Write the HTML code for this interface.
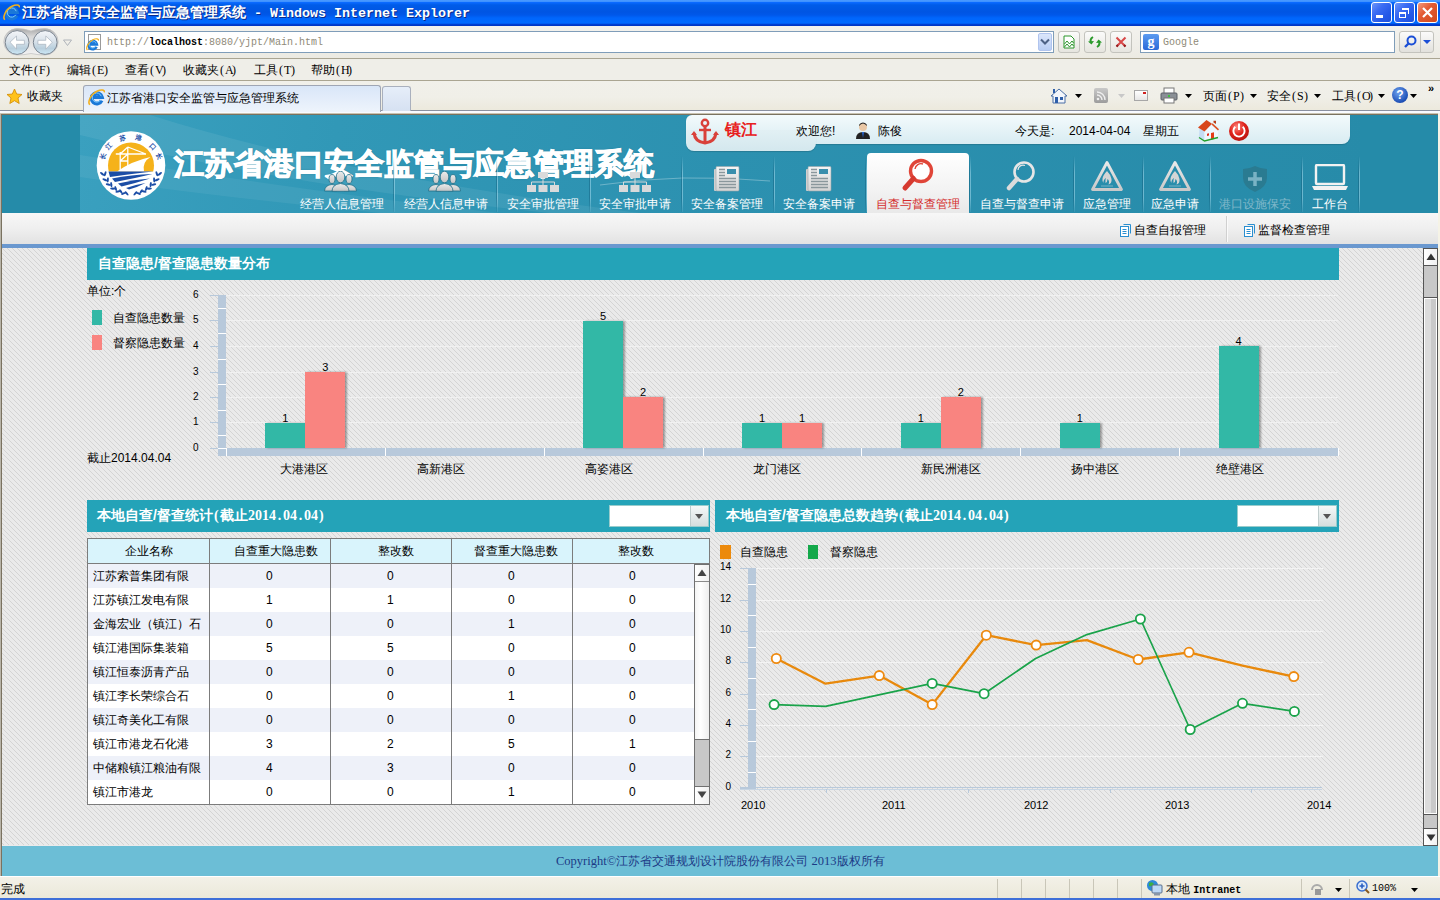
<!DOCTYPE html><html><head><meta charset="utf-8"><style>
*{margin:0;padding:0;box-sizing:border-box}
html,body{width:1440px;height:900px;overflow:hidden;background:#ece9d8;font-family:"Liberation Sans",sans-serif;font-size:12px;color:#000;line-height:1}
.a{position:absolute;white-space:nowrap}
.m{font-family:"Liberation Mono",monospace}
.wb{top:2px;width:21px;height:21px;border:1px solid #fff;border-radius:3px;background:linear-gradient(135deg,#6d96fa 0%,#3b6cf3 35%,#2559e8 70%,#1e50dc 100%)}
.nl{color:#fff;font-size:12px;top:198px}
.sep{top:156px;width:2px;height:56px;background:linear-gradient(90deg,rgba(10,80,110,.35) 50%,rgba(190,235,250,.45) 50%);-webkit-mask-image:linear-gradient(rgba(0,0,0,0),#000 30%,#000 75%,rgba(0,0,0,.2))}
.sec{background:#24a3b8;color:#fff;font-weight:bold;font-size:14px}
.tk{font-size:10px;color:#000}
</style></head><body>
<div class="a" style="left:0;top:0;width:1440px;height:26px;background:linear-gradient(#4a9aff 0px,#3f92ff 1.5px,#0a6aff 2.5px,#005ce8 5px,#0055e3 12px,#0058ea 15px,#0066fc 18px,#006aff 23.2px,#0040d4 24.2px,#0034c0 26px)"></div>
<svg class="a" style="left:3px;top:4px" width="17" height="17" viewBox="0 0 17 17"><path d="M13.6 11.4A5.2 5.2 0 1 1 13.9 8.1H4.2" fill="none" stroke="#1a78d8" stroke-width="3.8"/><path d="M12.8 10.8A4.6 4.6 0 1 1 13.2 7.2" fill="none" stroke="#7ccaff" stroke-width="1"/><path d="M1.8 15.8C-0.8 13 3 5 9 2.2C13 0.3 16.8 0.6 16.4 3.4" fill="none" stroke="#f2b01e" stroke-width="1.6"/></svg>
<div class="a" style="left:22px;top:5px;color:#fff;font-weight:bold;font-size:14px;text-shadow:1px 1px 0 #0b2c8a">江苏省港口安全监管与应急管理系统</div>
<div class="a m" style="left:254px;top:7px;color:#fff;font-weight:bold;font-size:13.33px;text-shadow:1px 1px 0 #0b2c8a">- Windows Internet Explorer</div>
<div class="a wb" style="left:1371px"><div class="a" style="left:4px;top:12px;width:7px;height:3px;background:#fff"></div></div>
<div class="a wb" style="left:1394px"><div class="a" style="left:4px;top:9px;width:7px;height:6px;border:1px solid #fff;border-top-width:2px"></div><div class="a" style="left:7px;top:5px;width:7px;height:6px;border-top:2px solid #fff;border-right:1px solid #fff"></div></div>
<div class="a wb" style="left:1417px;background:linear-gradient(135deg,#f29a7e 0%,#e35b34 40%,#d14a1c 100%)"><svg class="a" style="left:3px;top:3px" width="13" height="13"><path d="M2 2L11 11M11 2L2 11" stroke="#fff" stroke-width="2.2"/></svg></div>
<div class="a" style="left:0;top:26px;width:1440px;height:32px;background:linear-gradient(#f3f2ee 0%,#efeee8 60%,#eceae2 100%)"></div>
<div class="a" style="left:0;top:58px;width:1440px;height:1px;background:#aaa592"></div>
<svg class="a" style="left:0;top:26px" width="80" height="32" viewBox="0 26 80 32">
<defs><linearGradient id="bf" x1="0" y1="0" x2="0" y2="1"><stop offset="0" stop-color="#f4f6f9"/><stop offset=".45" stop-color="#d9e2ea"/><stop offset=".75" stop-color="#b9cfdd"/><stop offset="1" stop-color="#cfeaf8"/></linearGradient>
<linearGradient id="pl" x1="0" y1="0" x2="0" y2="1"><stop offset="0" stop-color="#a9a9a9"/><stop offset=".3" stop-color="#d8d8d8"/><stop offset="1" stop-color="#f2f2f2"/></linearGradient></defs>
<path d="M17 28.6Q24 28.6 31 31Q38 28.6 45 28.6A13.2 13.2 0 0 1 45 55Q38 55 31 53.5Q24 55 17 55A13.2 13.2 0 0 1 17 28.6Z" fill="url(#pl)" stroke="#c4c4c4" stroke-width=".8"/>
<circle cx="17.1" cy="42.5" r="11.9" fill="url(#bf)" stroke="#7b8590" stroke-width="1"/>
<circle cx="45.2" cy="42.5" r="11.9" fill="url(#bf)" stroke="#7b8590" stroke-width="1"/>
<path d="M10 42.2L16.5 36V40.3H24.4V44.3H16.5V49.2Z" fill="#fff" stroke="#a8b2bd" stroke-width=".7" stroke-linejoin="round"/>
<path d="M52.3 42.2L45.8 36V40.3H37.9V44.3H45.8V49.2Z" fill="#fff" stroke="#a8b2bd" stroke-width=".7" stroke-linejoin="round"/>
<path d="M63.5 40H71.5L67.5 45.5Z" fill="none" stroke="#b0b4ba" stroke-width="1"/>
</svg>
<div class="a" style="left:84px;top:31px;width:970px;height:22px;background:#fff;border:1px solid #7f9db9"></div>
<div class="a" style="left:88px;top:34px;width:13px;height:16px;background:#fff;border:1px solid #9a9a9a"></div>
<svg class="a" style="left:86px;top:38px" width="13" height="13" viewBox="0 0 17 17"><path d="M13.6 11.4A5.2 5.2 0 1 1 13.9 8.1H4.2" fill="none" stroke="#1a78d8" stroke-width="3.8"/><path d="M12.8 10.8A4.6 4.6 0 1 1 13.2 7.2" fill="none" stroke="#7ccaff" stroke-width="1"/><path d="M1.8 15.8C-0.8 13 3 5 9 2.2C13 0.3 16.8 0.6 16.4 3.4" fill="none" stroke="#f2b01e" stroke-width="1.6"/></svg>
<div class="a m" style="left:107px;top:38px;font-size:10px;color:#8f8a78">http://<b style="color:#000">localhost</b>:8080/yjpt/Main.html</div>
<div class="a" style="left:1038px;top:33px;width:14px;height:18px;background:linear-gradient(#dbe6fb,#b9cdf4);border:1px solid #b0c4ee;border-radius:2px"></div>
<svg class="a" style="left:1040px;top:38px" width="10" height="8"><path d="M1 1.5L5 5.5L9 1.5" fill="none" stroke="#4d6185" stroke-width="2"/></svg>
<div class="a" style="left:1058px;top:31px;width:22px;height:22px;border:1px solid #c3c3bd;border-radius:3px;background:linear-gradient(#fbfbfa,#e6e5df)"></div>
<div class="a" style="left:1084px;top:31px;width:22px;height:22px;border:1px solid #c3c3bd;border-radius:3px;background:linear-gradient(#fbfbfa,#e6e5df)"></div>
<div class="a" style="left:1110px;top:31px;width:22px;height:22px;border:1px solid #c3c3bd;border-radius:3px;background:linear-gradient(#fbfbfa,#e6e5df)"></div>
<svg class="a" style="left:1063px;top:35px" width="12" height="14"><path d="M1 1H8L11 4V13H1Z" fill="#fff" stroke="#2a962a"/><path d="M1.5 9L4 6L6.5 9L9 6L10.5 8M1.5 12L4 9L6.5 12L9 9L10.5 11" fill="none" stroke="#2a962a"/></svg>
<svg class="a" style="left:1087px;top:35px" width="16" height="14"><path d="M6 2Q2.5 4 4 8" fill="none" stroke="#2c9a2c" stroke-width="2"/><path d="M1 6.5L4.5 9.5L7 6Z" fill="#2c9a2c"/><path d="M10 12Q13.5 10 12 6" fill="none" stroke="#2c9a2c" stroke-width="2"/><path d="M15 7.5L11.5 4.5L9 8Z" fill="#2c9a2c"/></svg>
<svg class="a" style="left:1115px;top:36px" width="12" height="12"><path d="M1.5 1.5L10.5 10.5M10.5 1.5L1.5 10.5" stroke="#d84848" stroke-width="2"/><path d="M3 9L1.5 10.5M9 9L10.5 10.5" stroke="#902020" stroke-width="2"/></svg>
<div class="a" style="left:1140px;top:31px;width:255px;height:22px;background:#fff;border:1px solid #7f9db9"></div>
<div class="a" style="left:1143px;top:34px;width:16px;height:16px;background:linear-gradient(#5b9bf0,#2b6ad8);border-radius:2px;color:#fff;font-size:14px;font-weight:bold;text-align:center;line-height:16px;font-family:Liberation Serif">g</div>
<div class="a m" style="left:1163px;top:38px;font-size:10px;color:#8f8a78">Google</div>
<div class="a" style="left:1399px;top:31px;width:35px;height:22px;border:1px solid #c3c3bd;border-radius:3px;background:linear-gradient(#fbfbfa,#e2e1dc)"></div>
<div class="a" style="left:1420px;top:32px;width:1px;height:20px;background:#c3c3bd"></div>
<svg class="a" style="left:1402px;top:34px" width="16" height="16"><circle cx="9.5" cy="6.5" r="4" fill="none" stroke="#1b4fd6" stroke-width="2"/><path d="M6.5 9.5L3 13" stroke="#1b4fd6" stroke-width="2.4"/></svg>
<svg class="a" style="left:1423px;top:39px" width="8" height="6"><path d="M0 1H8L4 5Z" fill="#1b4fd6"/></svg>
<div class="a" style="left:0;top:59px;width:1440px;height:21px;background:#efeee8"></div>
<div class="a" style="left:0;top:80px;width:1440px;height:1px;background:#aaa592"></div>
<div class="a" style="left:9px;top:64px;font-size:12px">文件<span style="display:inline-block;width:6px;text-align:center;font-family:Liberation Serif;font-size:12px;">(</span><span style="display:inline-block;width:6px;text-align:center;font-family:Liberation Serif;font-size:12px;">F</span><span style="display:inline-block;width:6px;text-align:center;font-family:Liberation Serif;font-size:12px;">)</span></div>
<div class="a" style="left:67px;top:64px;font-size:12px">编辑<span style="display:inline-block;width:6px;text-align:center;font-family:Liberation Serif;font-size:12px;">(</span><span style="display:inline-block;width:6px;text-align:center;font-family:Liberation Serif;font-size:12px;">E</span><span style="display:inline-block;width:6px;text-align:center;font-family:Liberation Serif;font-size:12px;">)</span></div>
<div class="a" style="left:125px;top:64px;font-size:12px">查看<span style="display:inline-block;width:6px;text-align:center;font-family:Liberation Serif;font-size:12px;">(</span><span style="display:inline-block;width:6px;text-align:center;font-family:Liberation Serif;font-size:12px;">V</span><span style="display:inline-block;width:6px;text-align:center;font-family:Liberation Serif;font-size:12px;">)</span></div>
<div class="a" style="left:183px;top:64px;font-size:12px">收藏夹<span style="display:inline-block;width:6px;text-align:center;font-family:Liberation Serif;font-size:12px;">(</span><span style="display:inline-block;width:6px;text-align:center;font-family:Liberation Serif;font-size:12px;">A</span><span style="display:inline-block;width:6px;text-align:center;font-family:Liberation Serif;font-size:12px;">)</span></div>
<div class="a" style="left:254px;top:64px;font-size:12px">工具<span style="display:inline-block;width:6px;text-align:center;font-family:Liberation Serif;font-size:12px;">(</span><span style="display:inline-block;width:6px;text-align:center;font-family:Liberation Serif;font-size:12px;">T</span><span style="display:inline-block;width:6px;text-align:center;font-family:Liberation Serif;font-size:12px;">)</span></div>
<div class="a" style="left:311px;top:64px;font-size:12px">帮助<span style="display:inline-block;width:6px;text-align:center;font-family:Liberation Serif;font-size:12px;">(</span><span style="display:inline-block;width:6px;text-align:center;font-family:Liberation Serif;font-size:12px;">H</span><span style="display:inline-block;width:6px;text-align:center;font-family:Liberation Serif;font-size:12px;">)</span></div>
<div class="a" style="left:0;top:81px;width:1440px;height:32px;background:linear-gradient(#f1f0ea,#f0efe8 50%,#ebe8da)"></div>
<div class="a" style="left:0;top:110px;width:1440px;height:1px;background:#8a90a0"></div>
<div class="a" style="left:0;top:111px;width:1440px;height:2px;background:#f8faff"></div>
<div class="a" style="left:0;top:113px;width:1440px;height:1px;background:#c9c3b0"></div>
<svg class="a" style="left:6px;top:88px" width="17" height="17" viewBox="0 0 17 17"><path d="M8.5 1L10.7 6L16 6.5L12 10L13.2 15.5L8.5 12.7L3.8 15.5L5 10L1 6.5L6.3 6Z" fill="#ffc21a" stroke="#d08a00" stroke-width=".8"/></svg>
<div class="a" style="left:27px;top:90px;font-size:12px">收藏夹</div>
<div class="a" style="left:83px;top:85px;width:298px;height:27px;border:1px solid #9fa6b5;border-bottom:none;border-radius:3px 3px 0 0;background:linear-gradient(#d9e6f8,#eef4fc)"></div>
<svg class="a" style="left:88px;top:89px" width="17" height="17" viewBox="0 0 17 17"><path d="M13.6 11.4A5.2 5.2 0 1 1 13.9 8.1H4.2" fill="none" stroke="#1a78d8" stroke-width="3.8"/><path d="M12.8 10.8A4.6 4.6 0 1 1 13.2 7.2" fill="none" stroke="#7ccaff" stroke-width="1"/><path d="M1.8 15.8C-0.8 13 3 5 9 2.2C13 0.3 16.8 0.6 16.4 3.4" fill="none" stroke="#f2b01e" stroke-width="1.6"/></svg>
<div class="a" style="left:107px;top:92px;font-size:12px">江苏省港口安全监管与应急管理系统</div>
<div class="a" style="left:382px;top:86px;width:29px;height:25px;border:1px solid #a9b0bd;border-bottom:none;border-radius:3px 3px 0 0;background:linear-gradient(#e6eef9,#d6e1f2)"></div>
<svg class="a" style="left:1050px;top:87px" width="18" height="18"><path d="M9 2L1 9H3V16H15V9H17Z" fill="#f3f6fb" stroke="#4a6fa5"/><rect x="5" y="10" width="3" height="6" fill="#2e5fa9"/><rect x="10" y="10" width="3" height="3" fill="#2e5fa9"/><rect x="3" y="2" width="2" height="4" fill="#2e5fa9"/></svg>
<svg class="a" style="left:1075px;top:94px" width="7" height="4"><path d="M0 0H7L3.5 4Z" fill="#000"/></svg>
<div class="a" style="left:1094px;top:88px;width:14px;height:15px;border-radius:2px;background:linear-gradient(#c9c9c9,#9c9c9c)"></div>
<svg class="a" style="left:1096px;top:91px" width="10" height="10"><circle cx="2" cy="8" r="1.3" fill="#eee"/><path d="M1 4A5 5 0 0 1 6 9M1 1A8 8 0 0 1 9 9" fill="none" stroke="#eee" stroke-width="1.4"/></svg>
<svg class="a" style="left:1118px;top:94px" width="7" height="4"><path d="M0 0H7L3.5 4Z" fill="#c8c8c8"/></svg>
<div class="a" style="left:1134px;top:90px;width:14px;height:11px;border:1px solid #a7a7a7;background:linear-gradient(#fff,#e6e6e6)"></div>
<div class="a" style="left:1143px;top:92px;width:3px;height:2px;background:#d02020"></div>
<svg class="a" style="left:1160px;top:87px" width="18" height="17"><rect x="4" y="1" width="10" height="6" fill="#fff" stroke="#777"/><rect x="1" y="6" width="16" height="7" rx="1" fill="#8a8f96" stroke="#5b5f66"/><rect x="4" y="11" width="10" height="5" fill="#fff" stroke="#777"/><rect x="8" y="8" width="2" height="2" fill="#3fbf3f"/></svg>
<svg class="a" style="left:1185px;top:94px" width="7" height="4"><path d="M0 0H7L3.5 4Z" fill="#000"/></svg>
<div class="a" style="left:1203px;top:90px;font-size:12px">页面<span style="display:inline-block;width:6px;text-align:center;font-family:Liberation Serif;font-size:12px;">(</span><span style="display:inline-block;width:6px;text-align:center;font-family:Liberation Serif;font-size:12px;">P</span><span style="display:inline-block;width:6px;text-align:center;font-family:Liberation Serif;font-size:12px;">)</span></div>
<svg class="a" style="left:1250px;top:94px" width="7" height="4"><path d="M0 0H7L3.5 4Z" fill="#000"/></svg>
<div class="a" style="left:1267px;top:90px;font-size:12px">安全<span style="display:inline-block;width:6px;text-align:center;font-family:Liberation Serif;font-size:12px;">(</span><span style="display:inline-block;width:6px;text-align:center;font-family:Liberation Serif;font-size:12px;">S</span><span style="display:inline-block;width:6px;text-align:center;font-family:Liberation Serif;font-size:12px;">)</span></div>
<svg class="a" style="left:1314px;top:94px" width="7" height="4"><path d="M0 0H7L3.5 4Z" fill="#000"/></svg>
<div class="a" style="left:1332px;top:90px;font-size:12px">工具<span style="display:inline-block;width:6px;text-align:center;font-family:Liberation Serif;font-size:12px;">(</span><span style="display:inline-block;width:6px;text-align:center;font-family:Liberation Serif;font-size:12px;">O</span><span style="display:inline-block;width:6px;text-align:center;font-family:Liberation Serif;font-size:12px;">)</span></div>
<svg class="a" style="left:1378px;top:94px" width="7" height="4"><path d="M0 0H7L3.5 4Z" fill="#000"/></svg>
<div class="a" style="left:1392px;top:87px;width:16px;height:16px;border-radius:50%;background:radial-gradient(circle at 40% 35%,#6fa3ef,#1d4fb6 70%,#183c86);color:#fff;font-weight:bold;font-size:12px;text-align:center;line-height:16px">?</div>
<svg class="a" style="left:1410px;top:94px" width="7" height="4"><path d="M0 0H7L3.5 4Z" fill="#000"/></svg>
<div class="a" style="left:1428px;top:83px;font-size:11px;font-weight:bold">»</div>
<div class="a" style="left:0;top:114px;width:1440px;height:763px;background:#ebebeb"></div>
<svg class="a" style="left:2px;top:248px" width="1436" height="597"><defs><pattern id="st" width="5" height="5" patternUnits="userSpaceOnUse"><rect width="5" height="5" fill="#eaeaea"/><rect x="0" y="0" width="1" height="1" fill="#d4d4d4"/><rect x="1" y="1" width="1" height="1" fill="#d4d4d4"/><rect x="2" y="2" width="1" height="1" fill="#d4d4d4"/><rect x="3" y="3" width="1" height="1" fill="#d4d4d4"/><rect x="4" y="4" width="1" height="1" fill="#d4d4d4"/></pattern></defs><rect width="1436" height="597" fill="url(#st)"/></svg>
<div class="a" style="left:0;top:115px;width:1440px;height:98px;background:#258ba9"></div>
<div class="a" style="left:80px;top:115px;width:1280px;height:98px;background:linear-gradient(100deg,#3aa0bf 0%,#3198b7 20%,#2c91b0 50%,#278ba9 100%)"></div>
<svg class="a" style="left:80px;top:115px" width="1280" height="98"><path d="M0 0H70Q260 60 560 98H470Q200 70 0 20Z" fill="rgba(255,255,255,.07)"/><path d="M0 40Q250 80 420 98H300Q120 80 0 62Z" fill="rgba(255,255,255,.06)"/><path d="M520 70Q600 58 690 66" stroke="rgba(255,255,255,.3)" fill="none"/></svg>
<div class="a" style="left:0;top:114px;width:1440px;height:1px;background:#7a7260"></div>
<div class="a" style="left:0;top:114px;width:1px;height:763px;background:#b8b4a8"></div>
<div class="a" style="left:1px;top:114px;width:1px;height:763px;background:#7a7260"></div>
<div class="a" style="left:1438px;top:113px;width:2px;height:764px;background:#f2f1ea"></div>
<svg class="a" style="left:96px;top:131px" width="70" height="70" viewBox="0 0 70 70"><circle cx="35" cy="34.5" r="34.3" fill="#fff"/><clipPath id="lc"><rect x="0" y="0" width="70" height="40.5"/></clipPath><circle cx="35" cy="34.5" r="23" fill="#f5b21a" clip-path="url(#lc)"/><path d="M21 40.5Q36 30 54.5 26Q46 31 48 40.5Z" fill="#fff"/><path d="M24.2 21V40M31.8 16V38M19.8 23H50M31.8 16L50 23M24.2 23L31.8 16M24.2 30H31.8M24.2 30L31.8 23" stroke="#fff" stroke-width="1.3" fill="none"/><path d="M12.5 40.6H57.3Q40 42.5 14 46Z" fill="#1b4da6"/><path d="M16 47.5Q35 43.5 56.5 43Q38 47.5 19 51Z" fill="#1b4da6"/><path d="M22 52.5Q38 48.5 54 47.5Q40 52 25.5 55.5Z" fill="#1b4da6"/><path d="M30 57Q40 53.5 49.5 52Q42 56 33 58.5Z" fill="#1b4da6"/><g fill="#1b4da6"><ellipse cx="9.2" cy="42.8" rx="2.6" ry="1.05" transform="rotate(108 9.2 42.8)"/><ellipse cx="6.2" cy="42.8" rx="2.6" ry="1.05" transform="rotate(38 6.2 42.8)"/><ellipse cx="11.8" cy="48.8" rx="2.6" ry="1.05" transform="rotate(95 11.8 48.8)"/><ellipse cx="8.8" cy="48.8" rx="2.6" ry="1.05" transform="rotate(25 8.8 48.8)"/><ellipse cx="15.3" cy="53.6" rx="2.6" ry="1.05" transform="rotate(83 15.3 53.6)"/><ellipse cx="12.3" cy="53.6" rx="2.6" ry="1.05" transform="rotate(13 12.3 53.6)"/><ellipse cx="19.7" cy="57.6" rx="2.6" ry="1.05" transform="rotate(71 19.7 57.6)"/><ellipse cx="16.7" cy="57.6" rx="2.6" ry="1.05" transform="rotate(1 16.7 57.6)"/><ellipse cx="24.9" cy="60.5" rx="2.6" ry="1.05" transform="rotate(59 24.9 60.5)"/><ellipse cx="21.9" cy="60.5" rx="2.6" ry="1.05" transform="rotate(-11 21.9 60.5)"/><ellipse cx="30.6" cy="62.4" rx="2.6" ry="1.05" transform="rotate(47 30.6 62.4)"/><ellipse cx="27.6" cy="62.4" rx="2.6" ry="1.05" transform="rotate(-23 27.6 62.4)"/><ellipse cx="60.8" cy="42.8" rx="2.6" ry="1.05" transform="rotate(-108 60.8 42.8)"/><ellipse cx="63.8" cy="42.8" rx="2.6" ry="1.05" transform="rotate(-38 63.8 42.8)"/><ellipse cx="58.2" cy="48.8" rx="2.6" ry="1.05" transform="rotate(-95 58.2 48.8)"/><ellipse cx="61.2" cy="48.8" rx="2.6" ry="1.05" transform="rotate(-25 61.2 48.8)"/><ellipse cx="54.7" cy="53.6" rx="2.6" ry="1.05" transform="rotate(-83 54.7 53.6)"/><ellipse cx="57.7" cy="53.6" rx="2.6" ry="1.05" transform="rotate(-13 57.7 53.6)"/><ellipse cx="50.3" cy="57.6" rx="2.6" ry="1.05" transform="rotate(-71 50.3 57.6)"/><ellipse cx="53.3" cy="57.6" rx="2.6" ry="1.05" transform="rotate(-1 53.3 57.6)"/><ellipse cx="45.1" cy="60.5" rx="2.6" ry="1.05" transform="rotate(-59 45.1 60.5)"/><ellipse cx="48.1" cy="60.5" rx="2.6" ry="1.05" transform="rotate(11 48.1 60.5)"/><ellipse cx="39.4" cy="62.4" rx="2.6" ry="1.05" transform="rotate(-47 39.4 62.4)"/><ellipse cx="42.4" cy="62.4" rx="2.6" ry="1.05" transform="rotate(23 42.4 62.4)"/></g><text x="6.4" y="25.0" font-size="6.5" fill="#1b4da6" text-anchor="middle" dominant-baseline="central" font-weight="bold" transform="rotate(-70 6.4 25.0)">长</text><text x="12.7" y="14.9" font-size="6.5" fill="#1b4da6" text-anchor="middle" dominant-baseline="central" font-weight="bold" transform="rotate(-45 12.7 14.9)">江</text><text x="26.9" y="6.4" font-size="6.5" fill="#1b4da6" text-anchor="middle" dominant-baseline="central" font-weight="bold" transform="rotate(-15 26.9 6.4)">苏</text><text x="42.9" y="6.4" font-size="6.5" fill="#1b4da6" text-anchor="middle" dominant-baseline="central" font-weight="bold" transform="rotate(15 42.9 6.4)">港</text><text x="57.1" y="15.3" font-size="6.5" fill="#1b4da6" text-anchor="middle" dominant-baseline="central" font-weight="bold" transform="rotate(45 57.1 15.3)">口</text><text x="63.3" y="25.1" font-size="6.5" fill="#1b4da6" text-anchor="middle" dominant-baseline="central" font-weight="bold" transform="rotate(70 63.3 25.1)">长</text></svg>
<div class="a" style="left:174px;top:149px;color:#fff;font-size:29.8px;font-weight:900;letter-spacing:0;-webkit-text-stroke:1.1px #fff;text-shadow:0 0 2px rgba(0,60,90,.4)">江苏省港口安全监管与应急管理系统</div>
<div class="a" style="left:686px;top:115px;width:664px;height:29px;border-radius:6px 0 8px 8px;background:linear-gradient(#f3fafc,#d8ecf2);box-shadow:0 1px 1px rgba(0,0,0,.15)"></div>
<div class="a" style="left:686px;top:130px;width:130px;height:21px;border-radius:0 0 8px 8px;background:linear-gradient(#e2f0f4,#d4e8ee);box-shadow:0 1px 1px rgba(0,0,0,.15)"></div>
<svg class="a" style="left:691px;top:118px" width="28" height="27" viewBox="0 0 28 27"><circle cx="14" cy="5" r="3.2" fill="none" stroke="#d9413a" stroke-width="2.4"/><path d="M14 8V24" stroke="#d9413a" stroke-width="3"/><path d="M8 12H20" stroke="#d9413a" stroke-width="2.4"/><path d="M3 15 Q4 24 14 25 Q24 24 25 15" fill="none" stroke="#d9413a" stroke-width="3"/><path d="M0 17L3 13L6 17Z M22 17L25 13L28 17Z" fill="#d9413a"/></svg>
<div class="a" style="left:725px;top:122px;color:#e82020;font-size:16px;font-weight:bold">镇江</div>
<div class="a" style="left:796px;top:125px;font-size:12px">欢迎您!</div>
<svg class="a" style="left:855px;top:122px" width="16" height="18"><circle cx="8" cy="5" r="4" fill="#e9c7a5"/><path d="M4 4Q8 -1 12 4Q12 1 8 0.5Q4 1 4 4Z" fill="#222"/><path d="M1 17Q1 10 8 10Q15 10 15 17Z" fill="#222"/><path d="M7 10L8 16L9 10Z" fill="#2a6ad8"/></svg>
<div class="a" style="left:878px;top:125px;font-size:12px">陈俊</div>
<div class="a" style="left:1015px;top:125px;font-size:12px">今天是:</div>
<div class="a" style="left:1069px;top:125px;font-size:12px">2014-04-04<span style="display:inline-block;width:13px"></span>星期五</div>
<svg class="a" style="left:1198px;top:120px" width="22" height="22" viewBox="0 0 22 22">
<path d="M1.5 8L6.5 11V21L1 17.5Z" fill="#c6dcf4"/>
<path d="M6.5 11L14 4L20 9.5V17.5L6.5 21Z" fill="#eef6fd"/>
<path d="M0 7.5L8.5 0L14 3.8L6.5 11.5Z" fill="#d8461b"/>
<path d="M14 3.8L20.5 9.8" stroke="#dc5020" stroke-width="1.6"/>
<path d="M15.5 0.8H18V4L15.5 2.5Z" fill="#b8401a"/>
<path d="M13 13L16 12.2V19L13 19.8Z" fill="#e53b16"/>
<path d="M9 13.8L11 13.3V15.6L9 16.1Z" fill="#e02a1a"/>
<path d="M1 17.5L6.5 21L20 17.5" fill="none" stroke="#22a02a" stroke-width="1.3"/>
</svg>
<svg class="a" style="left:1228px;top:120px" width="22" height="22" viewBox="0 0 22 22">
<defs><radialGradient id="pw" cx=".4" cy=".3" r=".75"><stop offset="0" stop-color="#ff8a80"/><stop offset=".5" stop-color="#e0231c"/><stop offset="1" stop-color="#b5120e"/></radialGradient></defs>
<circle cx="11" cy="11" r="10" fill="url(#pw)"/>
<path d="M7.3 6.8A5.6 5.6 0 1 0 14.7 6.8" fill="none" stroke="#fff" stroke-width="1.9"/>
<path d="M11 3.5V10" stroke="#fff" stroke-width="2"/>
</svg>
<div class="a sep" style="left:393px"></div>
<div class="a sep" style="left:496px"></div>
<div class="a sep" style="left:589px"></div>
<div class="a sep" style="left:681px"></div>
<div class="a sep" style="left:773px"></div>
<div class="a sep" style="left:865px"></div>
<div class="a sep" style="left:969px"></div>
<div class="a sep" style="left:1073px"></div>
<div class="a sep" style="left:1142px"></div>
<div class="a sep" style="left:1209px"></div>
<div class="a sep" style="left:1301px"></div>
<div class="a sep" style="left:1358px"></div>
<div class="a" style="left:867px;top:153px;width:102px;height:60px;border-radius:4px 4px 0 0;background:linear-gradient(#ffffff,#f3f3f3 60%,#e9e9e9)"></div>
<div class="a nl" style="left:300px;color:#fff">经营人信息管理</div>
<div class="a nl" style="left:404px;color:#fff">经营人信息申请</div>
<div class="a nl" style="left:507px;color:#fff">安全审批管理</div>
<div class="a nl" style="left:599px;color:#fff">安全审批申请</div>
<div class="a nl" style="left:691px;color:#fff">安全备案管理</div>
<div class="a nl" style="left:783px;color:#fff">安全备案申请</div>
<div class="a nl" style="left:876px;color:#d42c2c">自查与督查管理</div>
<div class="a nl" style="left:980px;color:#fff">自查与督查申请</div>
<div class="a nl" style="left:1083px;color:#fff">应急管理</div>
<div class="a nl" style="left:1151px;color:#fff">应急申请</div>
<div class="a nl" style="left:1219px;color:#7fb7c9">港口设施保安</div>
<div class="a nl" style="left:1312px;color:#fff">工作台</div>
<svg class="a" style="left:324px;top:171px" width="33" height="21" viewBox="0 0 33 21"><defs><linearGradient id="pg" x1="0" y1="0" x2="0" y2="1"><stop offset="0" stop-color="#ececec"/><stop offset="1" stop-color="#c4c4c4"/></linearGradient></defs><g fill="url(#pg)" stroke="#1f6e88" stroke-width=".8"><ellipse cx="8" cy="8" rx="3" ry="4.5"/><path d="M0.5 20Q1 14 8 13.5Q12 13.8 13 16V20Z"/><ellipse cx="25" cy="8" rx="3" ry="4.5"/><path d="M32.5 20Q32 14 25 13.5Q21 13.8 20 16V20Z"/><ellipse cx="16.5" cy="6" rx="4.3" ry="5.8"/><path d="M8 20.3Q8 13.5 16.5 12.5Q25 13.5 25 20.3Z"/></g></svg>
<svg class="a" style="left:428px;top:171px" width="33" height="21" viewBox="0 0 33 21"><defs><linearGradient id="pg" x1="0" y1="0" x2="0" y2="1"><stop offset="0" stop-color="#ececec"/><stop offset="1" stop-color="#c4c4c4"/></linearGradient></defs><g fill="url(#pg)" stroke="#1f6e88" stroke-width=".8"><ellipse cx="8" cy="8" rx="3" ry="4.5"/><path d="M0.5 20Q1 14 8 13.5Q12 13.8 13 16V20Z"/><ellipse cx="25" cy="8" rx="3" ry="4.5"/><path d="M32.5 20Q32 14 25 13.5Q21 13.8 20 16V20Z"/><ellipse cx="16.5" cy="6" rx="4.3" ry="5.8"/><path d="M8 20.3Q8 13.5 16.5 12.5Q25 13.5 25 20.3Z"/></g></svg>
<svg class="a" style="left:526px;top:172px" width="34" height="20" viewBox="0 0 34 20"><g fill="#d9dadb"><rect x="12" y="0" width="10" height="6"/><rect x="1" y="13" width="9" height="7"/><rect x="12.5" y="13" width="9" height="7"/><rect x="24" y="13" width="9" height="7"/></g><path d="M17 6V10M5.5 13V10H28.5V13M17 10V13" stroke="#d9dadb" stroke-width="1" fill="none"/></svg>
<svg class="a" style="left:618px;top:172px" width="34" height="20" viewBox="0 0 34 20"><g fill="#d9dadb"><rect x="12" y="0" width="10" height="6"/><rect x="1" y="13" width="9" height="7"/><rect x="12.5" y="13" width="9" height="7"/><rect x="24" y="13" width="9" height="7"/></g><path d="M17 6V10M5.5 13V10H28.5V13M17 10V13" stroke="#d9dadb" stroke-width="1" fill="none"/></svg>
<svg class="a" style="left:714px;top:166px" width="26" height="26" viewBox="0 0 26 26"><defs><linearGradient id="dg" x1="0" y1="0" x2="0" y2="1"><stop offset="0" stop-color="#f4f4f4"/><stop offset="1" stop-color="#d4d4d4"/></linearGradient></defs><rect x="0" y="3" width="3" height="22" rx="1" fill="#d0d0d0"/><rect x="2" y="0.5" width="23" height="24.5" rx="1" fill="url(#dg)" stroke="#9aa4a8" stroke-width=".6"/><g stroke="#8a979c" stroke-width="1.4"><path d="M5 3.5H11M5 6.5H11M5 9.5H11M5 12.5H22M5 15.5H22M5 18.5H22M5 21.5H22"/></g><rect x="13" y="3" width="9" height="5" fill="#3a8fad"/></svg>
<svg class="a" style="left:806px;top:166px" width="26" height="26" viewBox="0 0 26 26"><defs><linearGradient id="dg" x1="0" y1="0" x2="0" y2="1"><stop offset="0" stop-color="#f4f4f4"/><stop offset="1" stop-color="#d4d4d4"/></linearGradient></defs><rect x="0" y="3" width="3" height="22" rx="1" fill="#d0d0d0"/><rect x="2" y="0.5" width="23" height="24.5" rx="1" fill="url(#dg)" stroke="#9aa4a8" stroke-width=".6"/><g stroke="#8a979c" stroke-width="1.4"><path d="M5 3.5H11M5 6.5H11M5 9.5H11M5 12.5H22M5 15.5H22M5 18.5H22M5 21.5H22"/></g><rect x="13" y="3" width="9" height="5" fill="#3a8fad"/></svg>
<svg class="a" style="left:901px;top:158px" width="34" height="34" viewBox="0 0 34 34"><circle cx="20" cy="13" r="10.5" fill="#fff" stroke="#e04538" stroke-width="3.4"/><path d="M14 11A6 6 0 0 1 22 6" fill="none" stroke="#e04538" stroke-width="1.4"/><path d="M12.5 20.5L4 30" stroke="#d63a30" stroke-width="5" stroke-linecap="round"/></svg>
<svg class="a" style="left:1005px;top:160px" width="32" height="32" viewBox="0 0 32 32"><circle cx="19" cy="12" r="9.5" fill="none" stroke="#e6e6e6" stroke-width="2.6"/><path d="M13 10A5 5 0 0 1 20 5.5" fill="none" stroke="#e6e6e6" stroke-width="1.2"/><path d="M12 19L4 28" stroke="#dcdcdc" stroke-width="4.5" stroke-linecap="round"/></svg>
<svg class="a" style="left:1090px;top:160px" width="34" height="32" viewBox="0 0 34 32"><defs><linearGradient id="wg" x1="0" y1="0" x2="0" y2="1"><stop offset="0" stop-color="#e9e9e9"/><stop offset="1" stop-color="#c9c9c9"/></linearGradient></defs><path d="M17 2.5L31.5 29.5H2.5Z" fill="none" stroke="url(#wg)" stroke-width="2.8" stroke-linejoin="round"/><path d="M17 11Q21 15 21.5 19Q22 23.5 18.5 24.5Q20 21 17.5 19Q17.5 22 15.5 23Q15 20 16 18Q13 20 13.5 23Q12 21 12.5 18.5Q13 15 17 11Z" fill="#d5d5d5"/><path d="M11 26H23" stroke="#8fbccc" stroke-width=".8"/></svg>
<svg class="a" style="left:1158px;top:160px" width="34" height="32" viewBox="0 0 34 32"><defs><linearGradient id="wg" x1="0" y1="0" x2="0" y2="1"><stop offset="0" stop-color="#e9e9e9"/><stop offset="1" stop-color="#c9c9c9"/></linearGradient></defs><path d="M17 2.5L31.5 29.5H2.5Z" fill="none" stroke="url(#wg)" stroke-width="2.8" stroke-linejoin="round"/><path d="M17 11Q21 15 21.5 19Q22 23.5 18.5 24.5Q20 21 17.5 19Q17.5 22 15.5 23Q15 20 16 18Q13 20 13.5 23Q12 21 12.5 18.5Q13 15 17 11Z" fill="#d5d5d5"/><path d="M11 26H23" stroke="#8fbccc" stroke-width=".8"/></svg>
<svg class="a" style="left:1241px;top:165px" width="28" height="28" viewBox="0 0 28 28"><path d="M14 1Q20 4 26 4V13Q26 22 14 27Q2 22 2 13V4Q8 4 14 1Z" fill="#2a7b91"/><path d="M14 7V21M7 14H21" stroke="#7ab3c4" stroke-width="3.5"/></svg>
<svg class="a" style="left:1311px;top:164px" width="38" height="28" viewBox="0 0 38 28"><rect x="5" y="1" width="28" height="19" rx="1" fill="none" stroke="#f2f2f2" stroke-width="2.4"/><path d="M1 22H37L35 26H3Z" fill="#f2f2f2"/></svg>
<div class="a" style="left:2px;top:213px;width:1436px;height:31px;background:linear-gradient(#f7f7f7,#efefef 50%,#e2e2e2)"></div>
<div class="a" style="left:2px;top:244px;width:1436px;height:4px;background:#6a98cf"></div>
<div class="a" style="left:1226px;top:216px;width:1px;height:26px;background:#d0d0d0"></div><div class="a" style="left:1227px;top:216px;width:1px;height:26px;background:#fafafa"></div>
<svg class="a" style="left:1120px;top:224px" width="11" height="13"><path d="M3.5 0.5H10.5V9.5" fill="none" stroke="#2a8fd0"/><rect x="0.5" y="2.5" width="8" height="10" fill="#fff" stroke="#2a8fd0"/><path d="M2.5 5.5H6.5M2.5 7.5H6.5M2.5 9.5H6.5" stroke="#2a8fd0"/></svg>
<div class="a" style="left:1134px;top:224px;font-size:12px">自查自报管理</div>
<svg class="a" style="left:1244px;top:224px" width="11" height="13"><path d="M3.5 0.5H10.5V9.5" fill="none" stroke="#2a8fd0"/><rect x="0.5" y="2.5" width="8" height="10" fill="#fff" stroke="#2a8fd0"/><path d="M2.5 5.5H6.5M2.5 7.5H6.5M2.5 9.5H6.5" stroke="#2a8fd0"/></svg>
<div class="a" style="left:1258px;top:224px;font-size:12px">监督检查管理</div>
<div class="a sec" style="left:87px;top:248px;width:1252px;height:32px"></div>
<div class="a" style="left:98px;top:256px;color:#fff;font-weight:bold;font-size:14px">自查隐患/督查隐患数量分布</div>
<div class="a" style="left:87px;top:285px;font-size:12px">单位:个</div>
<div class="a" style="left:92px;top:310px;width:10px;height:15px;background:#32b8a6"></div>
<div class="a" style="left:113px;top:312px;font-size:12px">自查隐患数量</div>
<div class="a" style="left:92px;top:335px;width:10px;height:15px;background:#f98480"></div>
<div class="a" style="left:113px;top:337px;font-size:12px">督察隐患数量</div>
<div class="a" style="left:87px;top:452px;font-size:12px">截止2014.04.04</div>
<div class="a" style="left:210px;top:448px;width:8px;height:1px;background:#b8c9db"></div>
<div class="a tk" style="left:193px;top:443px">0</div>
<div class="a" style="left:226px;top:422px;width:1112px;height:1px;background:#f1f1f1"></div>
<div class="a" style="left:210px;top:422px;width:8px;height:1px;background:#b8c9db"></div>
<div class="a tk" style="left:193px;top:417px">1</div>
<div class="a" style="left:226px;top:397px;width:1112px;height:1px;background:#f1f1f1"></div>
<div class="a" style="left:210px;top:397px;width:8px;height:1px;background:#b8c9db"></div>
<div class="a tk" style="left:193px;top:392px">2</div>
<div class="a" style="left:226px;top:372px;width:1112px;height:1px;background:#f1f1f1"></div>
<div class="a" style="left:210px;top:372px;width:8px;height:1px;background:#b8c9db"></div>
<div class="a tk" style="left:193px;top:367px">3</div>
<div class="a" style="left:226px;top:346px;width:1112px;height:1px;background:#f1f1f1"></div>
<div class="a" style="left:210px;top:346px;width:8px;height:1px;background:#b8c9db"></div>
<div class="a tk" style="left:193px;top:341px">4</div>
<div class="a" style="left:226px;top:320px;width:1112px;height:1px;background:#f1f1f1"></div>
<div class="a" style="left:210px;top:320px;width:8px;height:1px;background:#b8c9db"></div>
<div class="a tk" style="left:193px;top:315px">5</div>
<div class="a" style="left:226px;top:295px;width:1112px;height:1px;background:#f1f1f1"></div>
<div class="a" style="left:210px;top:295px;width:8px;height:1px;background:#b8c9db"></div>
<div class="a tk" style="left:193px;top:290px">6</div>
<div class="a" style="left:218px;top:295px;width:8px;height:161px;background:#b8c9db"></div>
<div class="a" style="left:218px;top:435px;width:8px;height:1px;background:#fff"></div>
<div class="a" style="left:218px;top:410px;width:8px;height:1px;background:#fff"></div>
<div class="a" style="left:218px;top:384px;width:8px;height:1px;background:#fff"></div>
<div class="a" style="left:218px;top:359px;width:8px;height:1px;background:#fff"></div>
<div class="a" style="left:218px;top:333px;width:8px;height:1px;background:#fff"></div>
<div class="a" style="left:218px;top:308px;width:8px;height:1px;background:#fff"></div>
<div class="a" style="left:218px;top:448px;width:1120px;height:8px;background:#b8c9db"></div>
<div class="a" style="left:218px;top:448px;width:8px;height:1px;background:#fff"></div>
<div class="a" style="left:226px;top:448px;width:1px;height:8px;background:#fff"></div>
<div class="a" style="left:385px;top:448px;width:1px;height:8px;background:#fff"></div>
<div class="a" style="left:544px;top:448px;width:1px;height:8px;background:#fff"></div>
<div class="a" style="left:703px;top:448px;width:1px;height:8px;background:#fff"></div>
<div class="a" style="left:861px;top:448px;width:1px;height:8px;background:#fff"></div>
<div class="a" style="left:1020px;top:448px;width:1px;height:8px;background:#fff"></div>
<div class="a" style="left:1179px;top:448px;width:1px;height:8px;background:#fff"></div>
<div class="a" style="left:1338px;top:448px;width:1px;height:8px;background:#fff"></div>
<div class="a" style="left:265.4px;top:422.5px;width:40px;height:25.5px;background:#32b8a6;box-shadow:2px 0 2px rgba(0,0,0,.35)"></div>
<div class="a tk" style="left:265.4px;top:412.5px;width:40px;text-align:center;font-size:11px">1</div>
<div class="a" style="left:305.4px;top:371.5px;width:40px;height:76.5px;background:#f98480;box-shadow:2px 0 2px rgba(0,0,0,.35)"></div>
<div class="a tk" style="left:305.4px;top:361.5px;width:40px;text-align:center;font-size:11px">3</div>
<div class="a" style="left:280px;top:463px;font-size:12px">大港港区</div>
<div class="a" style="left:417px;top:463px;font-size:12px">高新港区</div>
<div class="a" style="left:583.1px;top:320.5px;width:40px;height:127.5px;background:#32b8a6;box-shadow:2px 0 2px rgba(0,0,0,.35)"></div>
<div class="a tk" style="left:583.1px;top:310.5px;width:40px;text-align:center;font-size:11px">5</div>
<div class="a" style="left:623.1px;top:397.0px;width:40px;height:51.0px;background:#f98480;box-shadow:2px 0 2px rgba(0,0,0,.35)"></div>
<div class="a tk" style="left:623.1px;top:387.0px;width:40px;text-align:center;font-size:11px">2</div>
<div class="a" style="left:585px;top:463px;font-size:12px">高姿港区</div>
<div class="a" style="left:742.0px;top:422.5px;width:40px;height:25.5px;background:#32b8a6;box-shadow:2px 0 2px rgba(0,0,0,.35)"></div>
<div class="a tk" style="left:742.0px;top:412.5px;width:40px;text-align:center;font-size:11px">1</div>
<div class="a" style="left:782.0px;top:422.5px;width:40px;height:25.5px;background:#f98480;box-shadow:2px 0 2px rgba(0,0,0,.35)"></div>
<div class="a tk" style="left:782.0px;top:412.5px;width:40px;text-align:center;font-size:11px">1</div>
<div class="a" style="left:753px;top:463px;font-size:12px">龙门港区</div>
<div class="a" style="left:900.9px;top:422.5px;width:40px;height:25.5px;background:#32b8a6;box-shadow:2px 0 2px rgba(0,0,0,.35)"></div>
<div class="a tk" style="left:900.9px;top:412.5px;width:40px;text-align:center;font-size:11px">1</div>
<div class="a" style="left:940.9px;top:397.0px;width:40px;height:51.0px;background:#f98480;box-shadow:2px 0 2px rgba(0,0,0,.35)"></div>
<div class="a tk" style="left:940.9px;top:387.0px;width:40px;text-align:center;font-size:11px">2</div>
<div class="a" style="left:921px;top:463px;font-size:12px">新民洲港区</div>
<div class="a" style="left:1059.7px;top:422.5px;width:40px;height:25.5px;background:#32b8a6;box-shadow:2px 0 2px rgba(0,0,0,.35)"></div>
<div class="a tk" style="left:1059.7px;top:412.5px;width:40px;text-align:center;font-size:11px">1</div>
<div class="a" style="left:1071px;top:463px;font-size:12px">扬中港区</div>
<div class="a" style="left:1218.6px;top:346.0px;width:40px;height:102.0px;background:#32b8a6;box-shadow:2px 0 2px rgba(0,0,0,.35)"></div>
<div class="a tk" style="left:1218.6px;top:336.0px;width:40px;text-align:center;font-size:11px">4</div>
<div class="a" style="left:1216px;top:463px;font-size:12px">绝壁港区</div>
<div class="a sec" style="left:87px;top:500px;width:623px;height:32px"></div>
<div class="a" style="left:97px;top:508px;color:#fff;font-weight:bold;font-size:14px">本地自查/督查统计<span style="display:inline-block;width:7px;text-align:center;font-family:Liberation Serif;font-size:14px;">(</span>截止<span style="display:inline-block;width:7px;text-align:center;font-family:Liberation Serif;font-size:14px;">2</span><span style="display:inline-block;width:7px;text-align:center;font-family:Liberation Serif;font-size:14px;">0</span><span style="display:inline-block;width:7px;text-align:center;font-family:Liberation Serif;font-size:14px;">1</span><span style="display:inline-block;width:7px;text-align:center;font-family:Liberation Serif;font-size:14px;">4</span><span style="display:inline-block;width:7px;text-align:center;font-family:Liberation Serif;font-size:14px;">.</span><span style="display:inline-block;width:7px;text-align:center;font-family:Liberation Serif;font-size:14px;">0</span><span style="display:inline-block;width:7px;text-align:center;font-family:Liberation Serif;font-size:14px;">4</span><span style="display:inline-block;width:7px;text-align:center;font-family:Liberation Serif;font-size:14px;">.</span><span style="display:inline-block;width:7px;text-align:center;font-family:Liberation Serif;font-size:14px;">0</span><span style="display:inline-block;width:7px;text-align:center;font-family:Liberation Serif;font-size:14px;">4</span><span style="display:inline-block;width:7px;text-align:center;font-family:Liberation Serif;font-size:14px;">)</span></div>
<div class="a" style="left:609px;top:505px;width:100px;height:22px;background:#fff;border:1px solid #9cc"></div>
<div class="a" style="left:690px;top:506px;width:18px;height:20px;background:linear-gradient(#f5f8f8,#d5dede);border-left:1px solid #c0cccc"></div>
<svg class="a" style="left:695px;top:514px" width="8" height="5"><path d="M0 0H8L4 5Z" fill="#555"/></svg>
<div class="a" style="left:87px;top:538px;width:623px;height:267px;background:#fff;border:1px solid #7c7c7c"></div>
<div class="a" style="left:88px;top:539px;width:621px;height:25px;background:#d9f4fc;border-bottom:1px solid #7c7c7c"></div>
<div class="a" style="left:88px;top:564px;width:607px;height:24px;background:#eef1f9"></div>
<div class="a" style="left:93px;top:570px;font-size:12px">江苏索普集团有限</div>
<div class="a" style="left:266px;top:570px;font-size:12px">0</div>
<div class="a" style="left:387px;top:570px;font-size:12px">0</div>
<div class="a" style="left:508px;top:570px;font-size:12px">0</div>
<div class="a" style="left:629px;top:570px;font-size:12px">0</div>
<div class="a" style="left:88px;top:588px;width:607px;height:24px;background:#ffffff"></div>
<div class="a" style="left:93px;top:594px;font-size:12px">江苏镇江发电有限</div>
<div class="a" style="left:266px;top:594px;font-size:12px">1</div>
<div class="a" style="left:387px;top:594px;font-size:12px">1</div>
<div class="a" style="left:508px;top:594px;font-size:12px">0</div>
<div class="a" style="left:629px;top:594px;font-size:12px">0</div>
<div class="a" style="left:88px;top:612px;width:607px;height:24px;background:#eef1f9"></div>
<div class="a" style="left:93px;top:618px;font-size:12px">金海宏业（镇江）石</div>
<div class="a" style="left:266px;top:618px;font-size:12px">0</div>
<div class="a" style="left:387px;top:618px;font-size:12px">0</div>
<div class="a" style="left:508px;top:618px;font-size:12px">1</div>
<div class="a" style="left:629px;top:618px;font-size:12px">0</div>
<div class="a" style="left:88px;top:636px;width:607px;height:24px;background:#ffffff"></div>
<div class="a" style="left:93px;top:642px;font-size:12px">镇江港国际集装箱</div>
<div class="a" style="left:266px;top:642px;font-size:12px">5</div>
<div class="a" style="left:387px;top:642px;font-size:12px">5</div>
<div class="a" style="left:508px;top:642px;font-size:12px">0</div>
<div class="a" style="left:629px;top:642px;font-size:12px">0</div>
<div class="a" style="left:88px;top:660px;width:607px;height:24px;background:#eef1f9"></div>
<div class="a" style="left:93px;top:666px;font-size:12px">镇江恒泰沥青产品</div>
<div class="a" style="left:266px;top:666px;font-size:12px">0</div>
<div class="a" style="left:387px;top:666px;font-size:12px">0</div>
<div class="a" style="left:508px;top:666px;font-size:12px">0</div>
<div class="a" style="left:629px;top:666px;font-size:12px">0</div>
<div class="a" style="left:88px;top:684px;width:607px;height:24px;background:#ffffff"></div>
<div class="a" style="left:93px;top:690px;font-size:12px">镇江李长荣综合石</div>
<div class="a" style="left:266px;top:690px;font-size:12px">0</div>
<div class="a" style="left:387px;top:690px;font-size:12px">0</div>
<div class="a" style="left:508px;top:690px;font-size:12px">1</div>
<div class="a" style="left:629px;top:690px;font-size:12px">0</div>
<div class="a" style="left:88px;top:708px;width:607px;height:24px;background:#eef1f9"></div>
<div class="a" style="left:93px;top:714px;font-size:12px">镇江奇美化工有限</div>
<div class="a" style="left:266px;top:714px;font-size:12px">0</div>
<div class="a" style="left:387px;top:714px;font-size:12px">0</div>
<div class="a" style="left:508px;top:714px;font-size:12px">0</div>
<div class="a" style="left:629px;top:714px;font-size:12px">0</div>
<div class="a" style="left:88px;top:732px;width:607px;height:24px;background:#ffffff"></div>
<div class="a" style="left:93px;top:738px;font-size:12px">镇江市港龙石化港</div>
<div class="a" style="left:266px;top:738px;font-size:12px">3</div>
<div class="a" style="left:387px;top:738px;font-size:12px">2</div>
<div class="a" style="left:508px;top:738px;font-size:12px">5</div>
<div class="a" style="left:629px;top:738px;font-size:12px">1</div>
<div class="a" style="left:88px;top:756px;width:607px;height:24px;background:#eef1f9"></div>
<div class="a" style="left:93px;top:762px;font-size:12px">中储粮镇江粮油有限</div>
<div class="a" style="left:266px;top:762px;font-size:12px">4</div>
<div class="a" style="left:387px;top:762px;font-size:12px">3</div>
<div class="a" style="left:508px;top:762px;font-size:12px">0</div>
<div class="a" style="left:629px;top:762px;font-size:12px">0</div>
<div class="a" style="left:88px;top:780px;width:607px;height:24px;background:#ffffff"></div>
<div class="a" style="left:93px;top:786px;font-size:12px">镇江市港龙</div>
<div class="a" style="left:266px;top:786px;font-size:12px">0</div>
<div class="a" style="left:387px;top:786px;font-size:12px">0</div>
<div class="a" style="left:508px;top:786px;font-size:12px">1</div>
<div class="a" style="left:629px;top:786px;font-size:12px">0</div>
<div class="a" style="left:209px;top:539px;width:1px;height:265px;background:#7c7c7c"></div>
<div class="a" style="left:330px;top:539px;width:1px;height:265px;background:#7c7c7c"></div>
<div class="a" style="left:451px;top:539px;width:1px;height:265px;background:#7c7c7c"></div>
<div class="a" style="left:572px;top:539px;width:1px;height:265px;background:#7c7c7c"></div>
<div class="a" style="left:124.5px;top:545px;font-size:12px">企业名称</div>
<div class="a" style="left:233.5px;top:545px;font-size:12px">自查重大隐患数</div>
<div class="a" style="left:377.5px;top:545px;font-size:12px">整改数</div>
<div class="a" style="left:473.5px;top:545px;font-size:12px">督查重大隐患数</div>
<div class="a" style="left:617.5px;top:545px;font-size:12px">整改数</div>
<div class="a" style="left:694px;top:564px;width:16px;height:241px;background:linear-gradient(90deg,#f4f4f4,#fff 40%,#eee);border:1px solid #707070"></div>
<div class="a" style="left:695px;top:565px;width:14px;height:17px;background:linear-gradient(90deg,#fff,#f0f0f0);border-bottom:1px solid #8a8a8a"></div>
<svg class="a" style="left:697px;top:569px" width="10" height="7"><path d="M0.5 7H9.5L5 0.5Z" fill="#444"/></svg>
<div class="a" style="left:694px;top:739px;width:16px;height:48px;background:#c8c8c8;border:1px solid #707070"></div>
<div class="a" style="left:695px;top:787px;width:14px;height:17px;background:linear-gradient(90deg,#fff,#f0f0f0)"></div>
<svg class="a" style="left:697px;top:791px" width="10" height="7"><path d="M0.5 0.5H9.5L5 7Z" fill="#444"/></svg>
<div class="a sec" style="left:715px;top:500px;width:624px;height:32px"></div>
<div class="a" style="left:726px;top:508px;color:#fff;font-weight:bold;font-size:14px">本地自查/督查隐患总数趋势<span style="display:inline-block;width:7px;text-align:center;font-family:Liberation Serif;font-size:14px;">(</span>截止<span style="display:inline-block;width:7px;text-align:center;font-family:Liberation Serif;font-size:14px;">2</span><span style="display:inline-block;width:7px;text-align:center;font-family:Liberation Serif;font-size:14px;">0</span><span style="display:inline-block;width:7px;text-align:center;font-family:Liberation Serif;font-size:14px;">1</span><span style="display:inline-block;width:7px;text-align:center;font-family:Liberation Serif;font-size:14px;">4</span><span style="display:inline-block;width:7px;text-align:center;font-family:Liberation Serif;font-size:14px;">.</span><span style="display:inline-block;width:7px;text-align:center;font-family:Liberation Serif;font-size:14px;">0</span><span style="display:inline-block;width:7px;text-align:center;font-family:Liberation Serif;font-size:14px;">4</span><span style="display:inline-block;width:7px;text-align:center;font-family:Liberation Serif;font-size:14px;">.</span><span style="display:inline-block;width:7px;text-align:center;font-family:Liberation Serif;font-size:14px;">0</span><span style="display:inline-block;width:7px;text-align:center;font-family:Liberation Serif;font-size:14px;">4</span><span style="display:inline-block;width:7px;text-align:center;font-family:Liberation Serif;font-size:14px;">)</span></div>
<div class="a" style="left:1237px;top:505px;width:100px;height:22px;background:#fff;border:1px solid #9cc"></div>
<div class="a" style="left:1318px;top:506px;width:18px;height:20px;background:linear-gradient(#f5f8f8,#d5dede);border-left:1px solid #c0cccc"></div>
<svg class="a" style="left:1323px;top:514px" width="8" height="5"><path d="M0 0H8L4 5Z" fill="#555"/></svg>
<div class="a" style="left:720px;top:545px;width:11px;height:14px;background:#ec8a0c"></div>
<div class="a" style="left:740px;top:546px;font-size:12px">自查隐患</div>
<div class="a" style="left:808px;top:545px;width:10px;height:14px;background:#13a84a"></div>
<div class="a" style="left:830px;top:546px;font-size:12px">督察隐患</div>
<div class="a" style="left:740px;top:788px;width:8px;height:1px;background:#b8c9db"></div>
<div class="a tk" style="left:700px;width:31px;text-align:right;top:782px">0</div>
<div class="a" style="left:756px;top:756px;width:567px;height:1px;background:#f4f4f4"></div>
<div class="a" style="left:740px;top:756px;width:8px;height:1px;background:#b8c9db"></div>
<div class="a tk" style="left:700px;width:31px;text-align:right;top:750px">2</div>
<div class="a" style="left:756px;top:725px;width:567px;height:1px;background:#f4f4f4"></div>
<div class="a" style="left:740px;top:725px;width:8px;height:1px;background:#b8c9db"></div>
<div class="a tk" style="left:700px;width:31px;text-align:right;top:719px">4</div>
<div class="a" style="left:756px;top:694px;width:567px;height:1px;background:#f4f4f4"></div>
<div class="a" style="left:740px;top:694px;width:8px;height:1px;background:#b8c9db"></div>
<div class="a tk" style="left:700px;width:31px;text-align:right;top:688px">6</div>
<div class="a" style="left:756px;top:662px;width:567px;height:1px;background:#f4f4f4"></div>
<div class="a" style="left:740px;top:662px;width:8px;height:1px;background:#b8c9db"></div>
<div class="a tk" style="left:700px;width:31px;text-align:right;top:656px">8</div>
<div class="a" style="left:756px;top:631px;width:567px;height:1px;background:#f4f4f4"></div>
<div class="a" style="left:740px;top:631px;width:8px;height:1px;background:#b8c9db"></div>
<div class="a tk" style="left:700px;width:31px;text-align:right;top:625px">10</div>
<div class="a" style="left:756px;top:600px;width:567px;height:1px;background:#f4f4f4"></div>
<div class="a" style="left:740px;top:600px;width:8px;height:1px;background:#b8c9db"></div>
<div class="a tk" style="left:700px;width:31px;text-align:right;top:594px">12</div>
<div class="a" style="left:756px;top:568px;width:567px;height:1px;background:#f4f4f4"></div>
<div class="a" style="left:740px;top:568px;width:8px;height:1px;background:#b8c9db"></div>
<div class="a tk" style="left:700px;width:31px;text-align:right;top:562px">14</div>
<div class="a" style="left:748px;top:568px;width:8px;height:221px;background:#b8c9db"></div>
<div class="a" style="left:748px;top:772px;width:8px;height:1px;background:#fff"></div>
<div class="a" style="left:748px;top:741px;width:8px;height:1px;background:#fff"></div>
<div class="a" style="left:748px;top:709px;width:8px;height:1px;background:#fff"></div>
<div class="a" style="left:748px;top:678px;width:8px;height:1px;background:#fff"></div>
<div class="a" style="left:748px;top:647px;width:8px;height:1px;background:#fff"></div>
<div class="a" style="left:748px;top:615px;width:8px;height:1px;background:#fff"></div>
<div class="a" style="left:748px;top:584px;width:8px;height:1px;background:#fff"></div>
<div class="a" style="left:740px;top:787px;width:582px;height:1px;background:#b8c9db"></div>
<div class="a" style="left:740px;top:789px;width:582px;height:1px;background:#c8d6e4"></div>
<div class="a" style="left:826px;top:789px;width:1px;height:4px;background:#b8c9db"></div>
<div class="a" style="left:968px;top:789px;width:1px;height:4px;background:#b8c9db"></div>
<div class="a" style="left:1110px;top:789px;width:1px;height:4px;background:#b8c9db"></div>
<div class="a" style="left:1251px;top:789px;width:1px;height:4px;background:#b8c9db"></div>
<div class="a tk" style="left:741px;top:800px;font-size:11px">2010</div>
<div class="a tk" style="left:882px;top:800px;font-size:11px">2011</div>
<div class="a tk" style="left:1024px;top:800px;font-size:11px">2012</div>
<div class="a tk" style="left:1165px;top:800px;font-size:11px">2013</div>
<div class="a tk" style="left:1307px;top:800px;font-size:11px">2014</div>
<svg class="a" style="left:0;top:0" width="1440" height="900"><polyline points="776.3,658.5 825.5,683.7 879.3,675.6 932.2,704.6 986.3,635.2 1036.2,645.1 1086.9,640.2 1138.2,659.5 1189.0,652.3 1242.5,665.7 1293.8,676.6" fill="none" stroke="#e8890c" stroke-width="2.3" stroke-linejoin="round"/><polyline points="774.1,704.6 825.5,706.4 932.2,683.4 984.1,693.7 1035.6,658.5 1086.9,634.6 1140.4,619.0 1190.2,729.5 1242.5,703.3 1294.4,711.4" fill="none" stroke="#1aa34a" stroke-width="1.7" stroke-linejoin="round"/><circle cx="776.3" cy="658.5" r="4.6" fill="#fff" stroke="#ee8a10" stroke-width="1.8"/><circle cx="879.3" cy="675.6" r="4.6" fill="#fff" stroke="#ee8a10" stroke-width="1.8"/><circle cx="932.2" cy="704.6" r="4.6" fill="#fff" stroke="#ee8a10" stroke-width="1.8"/><circle cx="986.3" cy="635.2" r="4.6" fill="#fff" stroke="#ee8a10" stroke-width="1.8"/><circle cx="1036.2" cy="645.1" r="4.6" fill="#fff" stroke="#ee8a10" stroke-width="1.8"/><circle cx="1138.2" cy="659.5" r="4.6" fill="#fff" stroke="#ee8a10" stroke-width="1.8"/><circle cx="1189.0" cy="652.3" r="4.6" fill="#fff" stroke="#ee8a10" stroke-width="1.8"/><circle cx="1293.8" cy="676.6" r="4.6" fill="#fff" stroke="#ee8a10" stroke-width="1.8"/><circle cx="774.1" cy="704.6" r="4.6" fill="#fff" stroke="#1aa34a" stroke-width="1.8"/><circle cx="932.2" cy="683.4" r="4.6" fill="#fff" stroke="#1aa34a" stroke-width="1.8"/><circle cx="984.1" cy="693.7" r="4.6" fill="#fff" stroke="#1aa34a" stroke-width="1.8"/><circle cx="1140.4" cy="619.0" r="4.6" fill="#fff" stroke="#1aa34a" stroke-width="1.8"/><circle cx="1190.2" cy="729.5" r="4.6" fill="#fff" stroke="#1aa34a" stroke-width="1.8"/><circle cx="1242.5" cy="703.3" r="4.6" fill="#fff" stroke="#1aa34a" stroke-width="1.8"/><circle cx="1294.4" cy="711.4" r="4.6" fill="#fff" stroke="#1aa34a" stroke-width="1.8"/></svg>
<div class="a" style="left:1423px;top:248px;width:15px;height:598px;background:#555"></div>
<div class="a" style="left:1424px;top:298px;width:13px;height:516px;border:1px solid #fff;background:linear-gradient(90deg,#dcdcdc 50%,#c9c9c9 50%)"></div>
<div class="a" style="left:1424px;top:249px;width:13px;height:16px;background:linear-gradient(90deg,#fff,#f0f0f0)"></div>
<svg class="a" style="left:1426px;top:253px" width="10" height="7"><path d="M0.5 7H9.5L5 0.5Z" fill="#333"/></svg>
<div class="a" style="left:1424px;top:266px;width:13px;height:31px;background:#c8c8c8"></div>
<div class="a" style="left:1424px;top:815px;width:13px;height:13px;background:#c8c8c8"></div>
<div class="a" style="left:1424px;top:829px;width:13px;height:16px;background:linear-gradient(90deg,#fff,#f0f0f0)"></div>
<svg class="a" style="left:1426px;top:834px" width="10" height="7"><path d="M0.5 0.5H9.5L5 7Z" fill="#333"/></svg>
<div class="a" style="left:1438px;top:114px;width:2px;height:763px;background:#f5f3e6"></div>
<div class="a" style="left:2px;top:846px;width:1436px;height:30px;background:#6cbed6"></div>
<div class="a" style="left:556px;top:855px;font-size:12px;color:#1c3a86"><span style="font-family:Liberation Serif;font-size:12.5px">Copyright©</span>江苏省交通规划设计院股份有限公司 <span style="font-family:Liberation Serif;font-size:12.5px">2013</span>版权所有</div>
<div class="a" style="left:0;top:876px;width:1440px;height:1px;background:#fff"></div>
<div class="a" style="left:0;top:877px;width:1440px;height:22px;background:linear-gradient(#f3f1e8,#ebe8d9)"></div>
<div class="a" style="left:0;top:898px;width:1440px;height:2px;background:#3e6fd8"></div>
<div class="a" style="left:1px;top:883px;font-size:12px">完成</div>
<div class="a" style="left:997px;top:879px;width:1px;height:19px;background:#c9c6b8"></div>
<div class="a" style="left:1021px;top:879px;width:1px;height:19px;background:#c9c6b8"></div>
<div class="a" style="left:1045px;top:879px;width:1px;height:19px;background:#c9c6b8"></div>
<div class="a" style="left:1069px;top:879px;width:1px;height:19px;background:#c9c6b8"></div>
<div class="a" style="left:1093px;top:879px;width:1px;height:19px;background:#c9c6b8"></div>
<div class="a" style="left:1117px;top:879px;width:1px;height:19px;background:#c9c6b8"></div>
<div class="a" style="left:1141px;top:879px;width:1px;height:19px;background:#c9c6b8"></div>
<div class="a" style="left:1301px;top:879px;width:1px;height:19px;background:#c9c6b8"></div>
<div class="a" style="left:1349px;top:879px;width:1px;height:19px;background:#c9c6b8"></div>
<svg class="a" style="left:1146px;top:879px" width="18" height="18"><circle cx="6.5" cy="6.5" r="5.5" fill="#2e8ad8"/><path d="M3 4Q6 2 8 5Q6 8 3 7Z" fill="#3cb043"/><rect x="6" y="6" width="10" height="8" rx="1" fill="#bcd8f6" stroke="#5a6f8a"/><rect x="8" y="14" width="6" height="2.5" fill="#8896a8"/></svg>
<div class="a" style="left:1166px;top:883px;font-size:12px">本地 <span class="m" style="font-size:10px;font-weight:bold">Intranet</span></div>
<svg class="a" style="left:1310px;top:881px" width="14" height="15"><path d="M2 9A5 5 0 1 1 12 9" fill="none" stroke="#aaa" stroke-width="2"/><rect x="5" y="8" width="6" height="6" fill="#999"/></svg>
<svg class="a" style="left:1335px;top:888px" width="7" height="4"><path d="M0 0H7L3.5 4Z" fill="#000"/></svg>
<svg class="a" style="left:1356px;top:880px" width="15" height="15"><circle cx="6" cy="6" r="5" fill="#dde9f9" stroke="#3a6fd0" stroke-width="1.5"/><path d="M3.5 6H8.5M6 3.5V8.5" stroke="#2a5fc0" stroke-width="1.6"/><path d="M9.5 9.5L13 13" stroke="#8a5a20" stroke-width="2"/></svg>
<div class="a m" style="left:1372px;top:884px;font-size:10px">100%</div>
<svg class="a" style="left:1411px;top:888px" width="7" height="4"><path d="M0 0H7L3.5 4Z" fill="#000"/></svg>
</body></html>
